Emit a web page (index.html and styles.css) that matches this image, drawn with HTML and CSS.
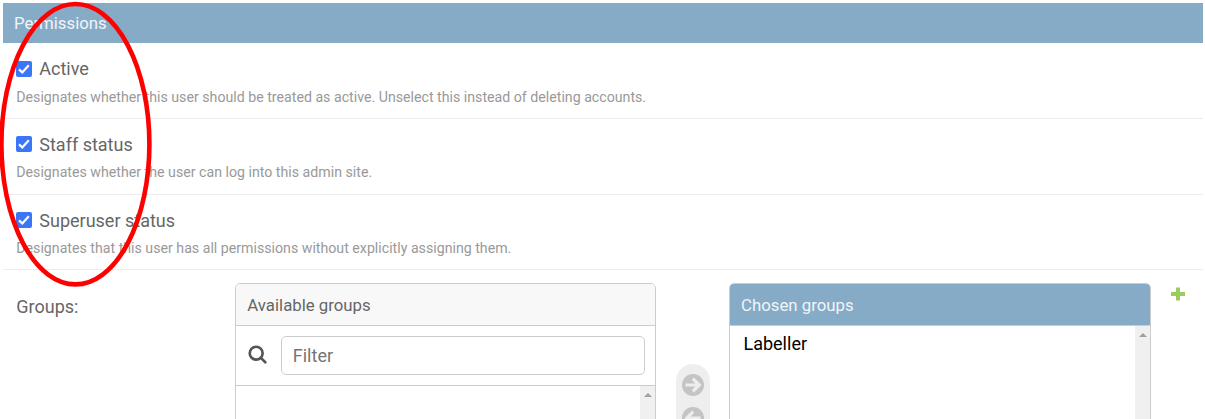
FILE: index.html
```html
<!DOCTYPE html>
<html lang="en">
<head>
<meta charset="utf-8">
<title>Permissions</title>
<link rel="stylesheet" href="styles.css">
</head>
<body>
<main class="module">
  <h2 class="module-title"><span>Permissions</span></h2>
  <section class="row">
    <label class="check"><svg class="box" viewBox="0 0 16 16"><rect width="16" height="16" rx="2"/><path d="M3 8.4 6.3 11.4 12.8 4.2"/></svg><span>Active</span></label>
    <p class="help"><span>Designates whether this user should be treated as active. Unselect this instead of deleting accounts.</span></p>
  </section>
  <section class="row">
    <label class="check"><svg class="box" viewBox="0 0 16 16"><rect width="16" height="16" rx="2"/><path d="M3 8.4 6.3 11.4 12.8 4.2"/></svg><span>Staff status</span></label>
    <p class="help"><span>Designates whether the user can log into this admin site.</span></p>
  </section>
  <section class="row">
    <label class="check"><svg class="box" viewBox="0 0 16 16"><rect width="16" height="16" rx="2"/><path d="M3 8.4 6.3 11.4 12.8 4.2"/></svg><span>Superuser status</span></label>
    <p class="help"><span>Designates that this user has all permissions without explicitly assigning them.</span></p>
  </section>
  <section class="groups">
    <div class="groups-label"><span>Groups:</span></div>
    <div class="panel available">
      <h3 class="panel-title"><span>Available groups</span></h3>
      <div class="filter">
        <svg class="search" viewBox="0 0 20 20"><circle cx="8.6" cy="8.6" r="6.8"/><path d="m13.6 13.6 4.6 4.6"/></svg>
        <div class="filter-input"><span>Filter</span></div>
      </div>
      <div class="list"><div class="scroll"><svg viewBox="0 0 8 4"><path d="M0 4 4 0 8 4z"/></svg></div></div>
    </div>
    <div class="chooser">
      <svg viewBox="0 0 22 22"><circle cx="11" cy="11" r="11"/><path d="M3.5 11H17M10.8 4.6 17.2 11 10.8 17.4"/></svg>
      <svg viewBox="0 0 22 22"><circle cx="11" cy="11" r="11"/><path d="M18.5 11H5M11.2 4.6 4.8 11 11.2 17.4"/></svg>
    </div>
    <div class="panel chosen">
      <h3 class="panel-title"><span>Chosen groups</span></h3>
      <div class="list"><span class="option">Labeller</span><div class="scroll"><svg viewBox="0 0 8 4"><path d="M0 4 4 0 8 4z"/></svg></div></div>
    </div>
    <svg class="add" viewBox="0 0 14 14"><path d="M7 .5v13M0 7h14"/></svg>
  </section>
  <svg class="marker" viewBox="0 0 156 290"><ellipse cx="75.4" cy="144.2" rx="74" ry="140.2"/></svg>
</main>
</body>
</html>
```
FILE: styles.css
```css
* { box-sizing: border-box; }
body { margin: 0; background: #fff; color: #666; font-family: Roboto, sans-serif; overflow: hidden; }
svg { display: block; flex: none; }
h2, h3, p { margin: 0; font-weight: 400; }
.module { position: relative; height: 419px; padding: 3px 2px 0 3px; overflow: hidden; }
.module-title { display: flex; align-items: center; height: 40px; padding-left: 11px; background: #86abc6; color: #f0f5f8; font-size: 16.8px; }
.row { height: 75.5px; padding: 14.5px 0 0 13.3px; border-bottom: 1px solid #ececec; }
.row:nth-of-type(2) { height: 76px; }
.row:nth-of-type(3) { height: 75px; }
.row:nth-of-type(2) .check span { padding-top: 1px; }
.check { display: flex; align-items: center; gap: 7px; height: 22px; font-size: 18px; }
.box { width: 16px; height: 16px; fill: #3b76f6; }
.box path { fill: none; stroke: #fff; stroke-width: 2.2; }
.help { height: 20px; margin-top: 7px; color: #999; font-size: 14.18px; line-height: 20px; white-space: nowrap; }
.groups { display: flex; align-items: flex-start; padding: 13px 0 0 13.3px; }
.groups-label { width: 219px; padding-top: 13px; font-size: 18px; line-height: 22px; }
.panel { height: 180px; border: 1px solid #ccc; border-radius: 5px; overflow: hidden; }
.available { width: 421px; }
.chosen { width: 422px; }
.panel-title { display: flex; align-items: center; height: 42.5px; padding: 1px 0 0 11px; border-bottom: 1px solid #ccc; background: #f8f8f8; font-size: 16.8px; }
.chosen .panel-title { padding-left: 10.5px; background: #86abc6; color: #f0f5f8; }
.filter { display: flex; align-items: center; height: 60px; padding: 0 10px 0 12px; border-bottom: 1px solid #ccc; }
.search { width: 19px; height: 19px; margin: -3px 13.5px 0 0; fill: none; stroke: #555; stroke-width: 2.8; stroke-linecap: round; }
.filter-input { flex: 1; height: 38.5px; padding-left: 11px; border: 1px solid #ccc; border-radius: 5px; color: #757575; font-size: 18px; line-height: 38px; }
.list { display: flex; justify-content: flex-end; height: 120px; }
.option { flex: 1; padding: 7px 0 0 13px; color: #000; font-size: 18px; line-height: 22px; }
.scroll { display: flex; justify-content: center; width: 15.5px; padding-top: 6.5px; background: #f0f0f0; }
.scroll svg { width: 8px; height: 4px; fill: #a0a0a0; }
.chooser { display: flex; flex-direction: column; align-items: center; gap: 11px; width: 34px; height: 110px; margin: 81px 19px 0 20.2px; padding-top: 10px; border-radius: 17px; background: #eee; }
.chooser svg { width: 22px; height: 22px; fill: #c4c4c4; }
.chooser path { fill: none; stroke: #eee; stroke-width: 3.2; }
.add { width: 14px; height: 14px; margin: 4px 0 0 20px; stroke: #9dcb63; stroke-width: 4; }
.marker { position: absolute; top: 0; left: 0; width: 156px; height: 290px; fill: none; stroke: #f00; stroke-width: 4.6; }
```
